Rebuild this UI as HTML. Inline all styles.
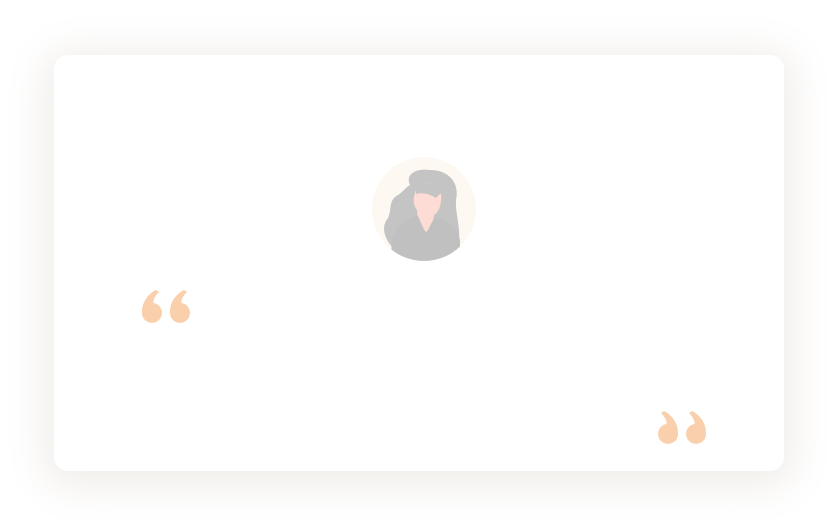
<!DOCTYPE html>
<html><head><style>
html,body{margin:0;padding:0;width:839px;height:527px;background:#fff;overflow:hidden}
.card{position:absolute;left:54px;top:55px;width:730px;height:416px;background:#fff;border-radius:14px;box-shadow:0 6px 40px 8px rgba(150,120,90,0.14)}
svg{position:absolute;left:0;top:0}
</style></head><body>
<div class="card"></div>
<svg width="839" height="527" viewBox="0 0 839 527">
<defs><clipPath id="c"><circle cx="424" cy="209" r="52"/></clipPath>
<g id="q"><path d="M0,22 C0,12 6,4 14,0 L17,2 C13,6 11,10 11.5,13 A10,10 0 1 1 0,22 Z"/></g></defs>
<circle cx="424" cy="209" r="52" fill="#fdf8f2"/>
<g clip-path="url(#c)">
<path d="M410,185 C405,175 415,168 430,170 C448,170 460,182 456,200 C455,215 462,230 458,245 L395,250 C385,240 380,228 388,218 C392,210 388,200 398,195 C403,192 405,188 410,185 Z" fill="#c4c4c4"/>
<path d="M415,193 C417,184 426,180 434,184 L441,194 C442,204 439,212 434,215 L433,225 L426,232 L418,222 L417,210 C413,205 413,198 415,193 Z" fill="#fcdcd5"/>
<path d="M416,186 C424,180 438,182 442,192 L436,198 C430,194 422,192 416,194 Z" fill="#c4c4c4"/>
<path d="M392,240 C395,225 408,218 418,216 L426,234 L434,218 C448,220 458,228 460,240 L460,270 L390,270 Z" fill="#c0c0c0"/>
</g>
<g fill="#f9d0ab">
<use href="#q" x="142" y="290"/>
<use href="#q" x="170" y="290"/>
<g transform="translate(1363,0) scale(-1,1)"><use href="#q" x="657" y="411"/><use href="#q" x="685" y="411"/></g>
</g>
</svg>
</body></html>
